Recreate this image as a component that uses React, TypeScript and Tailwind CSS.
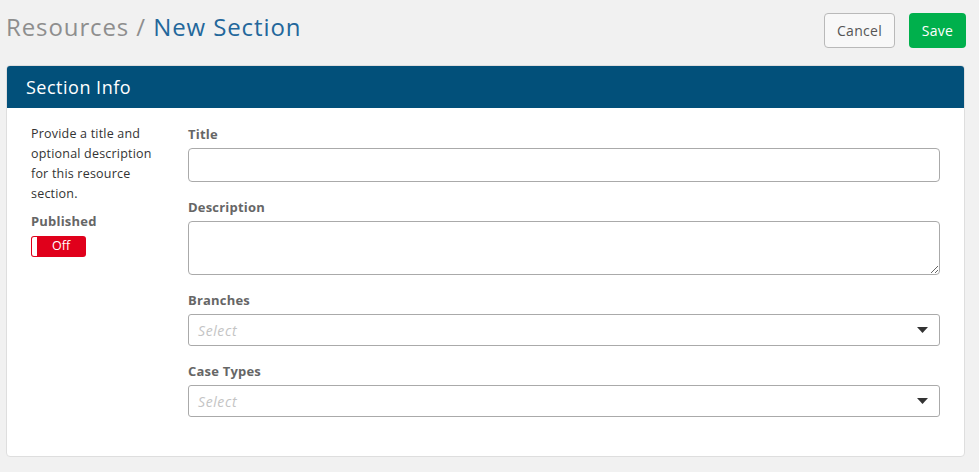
import React from "react";

function Caret() {
  return (
    <svg width="11" height="6" viewBox="0 0 11 6" className="shrink-0">
      <path d="M0 0 L11 0 L5.5 6 Z" fill="#333" />
    </svg>
  );
}

function SelectBox() {
  return (
    <div className="flex h-[32px] items-center justify-between rounded-[3px] border border-[#aaaaaa] bg-white pl-[9px] pr-[11px]">
      <span className="text-[14px] italic tracking-[0.6px] text-[#c4c4c4]">Select</span>
      <Caret />
    </div>
  );
}

export default function App() {
  return (
    <div
      className="min-h-[472px] w-full bg-[#f1f1f1] text-[#333]"
      style={{ fontFamily: '"Open Sans", "Liberation Sans", sans-serif' }}
    >
      <div className="flex items-start justify-between pl-[6px] pr-[13px] pt-[13px]">
        <h1 className="mt-[-1px] text-[24px] font-normal leading-[30px] tracking-[0.9px]">
          <span className="text-[#8e8e8e]">Resources / </span>
          <span className="text-[#23679b]">New Section</span>
        </h1>
        <div className="flex gap-[14px]">
          <button className="h-[35px] w-[71px] rounded-[4px] border border-[#b9b9b9] bg-[#f8f8f8] text-[14px] tracking-[0.3px] text-[#555]">
            Cancel
          </button>
          <button className="h-[35px] w-[57px] rounded-[4px] bg-[#00b04c] text-[14px] tracking-[0.3px] text-white">
            Save
          </button>
        </div>
      </div>

      <div className="mx-[6px] mt-[17px] w-[959px] overflow-hidden rounded-[4px] border border-[#dedede] bg-white">
        <div className="flex h-[42px] items-center bg-[#02507a] pl-[19px]">
          <span className="text-[18px] tracking-[0.5px] text-white">Section Info</span>
        </div>
        <div className="flex pb-[39px] pt-[16px]">
          <div className="w-[181px] shrink-0 pl-[24px]">
            <p className="w-[130px] text-[12.5px] leading-[20px] tracking-[0.2px] text-[#333]">
              Provide a title and optional description for this resource section.
            </p>
            <div className="mt-[9px] text-[13px] font-bold leading-[17px] tracking-[0.2px] text-[#666]">Published</div>
            <div className="mt-[6px] flex h-[21px] w-[55px] items-center rounded-[3px] bg-[#e0001b] p-[1px]">
              <div className="h-[19px] w-[5px] rounded-l-[2px] bg-white" />
              <span className="flex-1 text-center text-[12.5px] leading-none text-white">Off</span>
            </div>
          </div>
          <div className="w-[752px] shrink-0">
            <div className="text-[13px] font-bold leading-[20px] tracking-[0.2px] text-[#666]">Title</div>
            <div className="mt-[4px] h-[34px] rounded-[4px] border border-[#aaaaaa] bg-white" />
            <div className="mt-[15px] text-[13px] font-bold leading-[20px] tracking-[0.2px] text-[#666]">Description</div>
            <textarea className="mt-[4px] block h-[54px] w-full rounded-[4px] border border-[#aaaaaa] bg-white outline-none" />
            <div className="mt-[15px] text-[13px] font-bold leading-[20px] tracking-[0.2px] text-[#666]">Branches</div>
            <div className="mt-[4px]">
              <SelectBox />
            </div>
            <div className="mt-[15px] text-[13px] font-bold leading-[20px] tracking-[0.2px] text-[#666]">Case Types</div>
            <div className="mt-[4px]">
              <SelectBox />
            </div>
          </div>
        </div>
      </div>
    </div>
  );
}
